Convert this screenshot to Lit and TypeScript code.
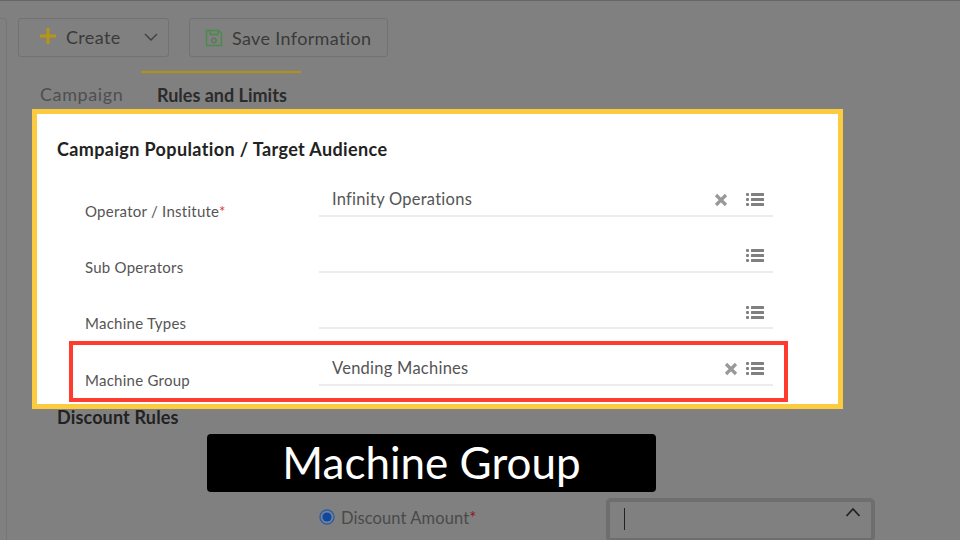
import { LitElement, html, css } from "lit";
import { customElement } from "lit/decorators.js";

const listIcon = html`<svg class="list" width="18" height="15" viewBox="0 0 18 15"><g fill="currentColor"><rect x="0" y="1" width="3" height="3" rx="1"/><rect x="0" y="6" width="3" height="3" rx="1"/><rect x="0" y="11" width="3" height="3" rx="1"/><rect x="5" y="1" width="13" height="3" rx=".5"/><rect x="5" y="6" width="13" height="3" rx=".5"/><rect x="5" y="11" width="13" height="3" rx=".5"/></g></svg>`;
const xIcon = html`<svg class="x" width="14" height="14" viewBox="0 0 14 14"><path d="M2 2l10 10M12 2L2 12" stroke="currentColor" stroke-width="3.2" fill="none"/></svg>`;

@customElement("app-root")
export class AppRoot extends LitElement {
  static styles = css`
    :host { display: block; position: relative; width: 960px; height: 540px; overflow: hidden; background: #808080; font-family: "Lato", "Noto Sans", sans-serif; color: #333; border-top: 1px solid #666; box-sizing: border-box; }
    .edge { position: absolute; left: -11px; top: 17px; width: 16px; height: 540px; border: 1px solid #757575; border-radius: 4px; }
    .toolbar { display: flex; gap: 20px; padding: 17px 0 0 18px; }
    .btn { height: 39px; box-sizing: border-box; border: 1px solid #727272; border-radius: 3px; display: flex; align-items: center; font-size: 18px; color: #3a3a3a; letter-spacing: .35px; }
    .create { width: 151px; padding-left: 21px; gap: 10px; }
    .create span { margin-top: -2px; }
    .create .chev { margin: -2px 0 0 13px; }
    .plus { margin-top: -3px; }
    .save { width: 199px; padding-left: 15px; gap: 9px; }
    .tabs { display: flex; height: 38px; margin-top: 14px; padding-left: 40px; box-sizing: border-box; font-size: 18px; line-height: 22px; }
    .tab { padding-top: 12px; color: #4f4f4f; width: 101px; white-space: nowrap; letter-spacing: .6px; }
    .tab.on { color: #2b2b2b; font-weight: 700; padding: 11px 0 0 16px; width: 160px; box-sizing: border-box; border-top: 2px solid #b3920f; letter-spacing: 0; }
    .panel { margin-left: 32px; width: 811px; height: 300px; box-sizing: border-box; border: 5px solid #fdcb3f; background: #fff; padding: 23px 20px 0 20px; }
    h2 { margin: 0; font-size: 18px; line-height: 24px; color: #222; font-weight: 700; letter-spacing: .38px; }
    .rows { margin-top: 13px; }
    .row { display: flex; height: 56.4px; padding-left: 28px; position: relative; box-sizing: border-box; }
    .row label { width: 234px; padding-top: 26.5px; font-size: 15px; line-height: 20px; color: #555; letter-spacing: .25px; }
    .req { color: #d33; }
    .field { width: 454px; height: 42.5px; padding: 14px 9px 0 13px; box-sizing: border-box; border-bottom: 2px solid #ececec; display: flex; align-items: flex-start; font-size: 16.5px; line-height: 22px; color: #555; letter-spacing: .25px; }
    .val { flex: 1; }
    .x { color: #999; margin: 5px 8px 0 0; }
    .r0 .x { margin-right: 18px; }
    .list { color: #808080; margin: 4px 0 0 0; }
    .mark { border: 4px solid #ff3b30; position: absolute; left: 12px; top: -2px; width: 719px; height: 61px; box-sizing: border-box; pointer-events: none; }
    .rule { margin: -4px 0 0 57px; font-size: 18px; line-height: 24px; font-weight: 700; color: #222; letter-spacing: .15px; }
    .discount { display: flex; align-items: flex-start; padding-left: 319px; margin-top: 69px; }
    .radio { width: 16px; height: 16px; flex: none; margin-top: 2px; }
    .dl { display: flex; align-items: flex-start; gap: 6px; margin-top: 9px; font-size: 16.5px; line-height: 20px; color: #4a4a4a; width: 287px; flex: none; letter-spacing: .1px; }
    .dl > span { margin-top: 1px; }
    .dl .req { color: #8c1c1c; }
    .amount { width: 269px; height: 44px; box-sizing: border-box; border: 4px solid #6e6e6e; border-radius: 5px; display: flex; justify-content: space-between; align-items: flex-start; padding: 6px 10px 0 14px; }
    .caret { width: 1px; height: 22px; background: #222; }
    .chev-up { margin-top: -1px; }
    .caption { position: absolute; left: 207px; top: 433px; width: 449px; height: 58px; border-radius: 4px; background: #000; color: #fff; display: flex; align-items: center; justify-content: center; font-size: 44px; line-height: 52px; font-family: "Lato", sans-serif; padding-bottom: 2px; box-sizing: border-box; }
  `;

  render() {
    const rows = [
      { l: "Operator / Institute", req: true, v: "Infinity Operations", x: true },
      { l: "Sub Operators" },
      { l: "Machine Types" },
      { l: "Machine Group", v: "Vending Machines", x: true, mark: true },
    ] as { l: string; req?: boolean; v?: string; x?: boolean; mark?: boolean }[];
    return html`
      <div class="edge"></div>
      <div class="toolbar">
        <div class="btn create">
          <svg class="plus" width="16" height="16" viewBox="0 0 16 16"><path d="M8 0v16M0 8h16" stroke="#b8960f" stroke-width="3"/></svg>
          <span>Create</span>
          <svg class="chev" width="14" height="8" viewBox="0 0 14 8"><path d="M1 1l6 6 6-6" fill="none" stroke="#3f3f3f" stroke-width="1.4"/></svg>
        </div>
        <div class="btn save">
          <svg width="18" height="18" viewBox="0 0 18 18" fill="none" stroke="#4c8a4c" stroke-width="1.5"><path d="M1.5 1.5h12l3 3v12h-15z"/><path d="M5 1.5v4h8v-4"/><circle cx="9" cy="11.5" r="2.2" stroke="#5a7a5a"/></svg>
          <span>Save Information</span>
        </div>
      </div>
      <div class="tabs">
        <div class="tab">Campaign</div>
        <div class="tab on">Rules and Limits</div>
      </div>
      <div class="panel">
        <h2>Campaign Population / Target Audience</h2>
        <div class="rows">
          ${rows.map((r, i) => html`
            <div class="row r${i}">
              <label>${r.l}${r.req ? html`<span class="req">*</span>` : ""}</label>
              <div class="field">
                <span class="val">${r.v ?? ""}</span>
                ${r.x ? xIcon : ""}
                ${listIcon}
              </div>
              ${r.mark ? html`<div class="mark"></div>` : ""}
            </div>`)}
        </div>
      </div>
      <div class="rule">Discount Rules</div>
      <div class="discount">
        <div class="dl">
          <svg class="radio" viewBox="0 0 16 16"><circle cx="8" cy="8" r="7" fill="none" stroke="#2a5fa8" stroke-width="1.4"/><circle cx="8" cy="8" r="4.6" fill="#0d47a8"/></svg>
          <span>Discount Amount<span class="req">*</span></span>
        </div>
        <div class="amount">
          <div class="caret"></div>
          <svg class="chev-up" width="16" height="10" viewBox="0 0 16 10"><path d="M1.5 9L8 2l6.5 7" fill="none" stroke="#222" stroke-width="1.8"/></svg>
        </div>
      </div>
      <div class="caption">Machine Group</div>
    `;
  }
}
